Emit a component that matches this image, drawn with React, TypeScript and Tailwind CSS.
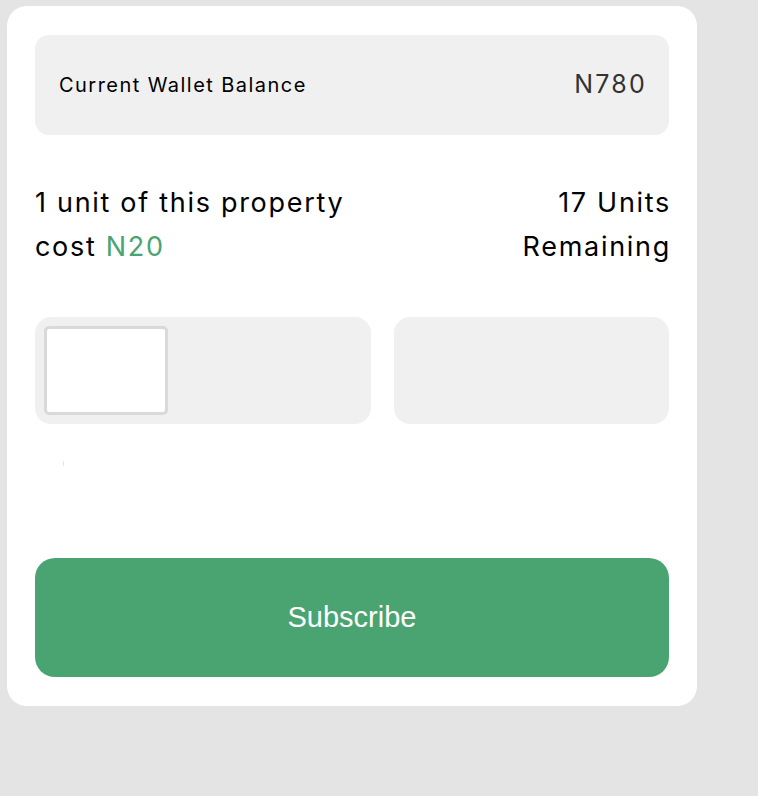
export default function App() {
  return (
    <div className="min-h-[796px] w-full bg-[#e4e4e4] pt-[6px] pl-[7px]">
      <div className="w-[690px] rounded-[20px] bg-white px-[28px] pt-[29px] pb-[29px] font-['Inter',sans-serif] text-black">
        {/* wallet */}
        <div className="flex h-[100px] items-center justify-between rounded-[14px] bg-[#f0f0f0] px-[24px]">
          <span className="text-[20px] tracking-[1.45px]">Current Wallet Balance</span>
          <span className="-mr-[2px] text-[25px] tracking-[2.2px] text-[#333]">N780</span>
        </div>

        {/* unit info */}
        <div className="mt-[46px] flex justify-between text-[27px] leading-[44px] tracking-[1.7px]">
          <div>
            <div>1 unit of this property</div>
            <div>
              cost <span className="text-[#4aa471]">N20</span>
            </div>
          </div>
          <div className="-mr-[2px] text-right">
            <div>17 Units</div>
            <div>Remaining</div>
          </div>
        </div>

        {/* inputs */}
        <div className="mt-[48px] flex gap-[23px]">
          <div className="h-[107px] w-[336px] rounded-[16px] bg-[#f0f0f0] p-[9px]">
            <input
              type="text"
              className="h-[89px] w-[124px] rounded-[5px] border-[3px] border-[#d9d9d9] bg-white outline-none"
            />
          </div>
          <div className="h-[107px] flex-1 rounded-[16px] bg-[#f0f0f0]" />
        </div>

        <div className="h-[134px] pt-[37px] pl-[28px]">
          <div className="h-[5px] w-px bg-[#e6e6e6]" />
        </div>

        <button className="flex h-[119px] w-full items-center justify-center rounded-[20px] bg-[#4aa471] font-['Liberation_Sans',Arial,sans-serif] text-[29px] text-white">
          Subscribe
        </button>
      </div>
    </div>
  )
}
